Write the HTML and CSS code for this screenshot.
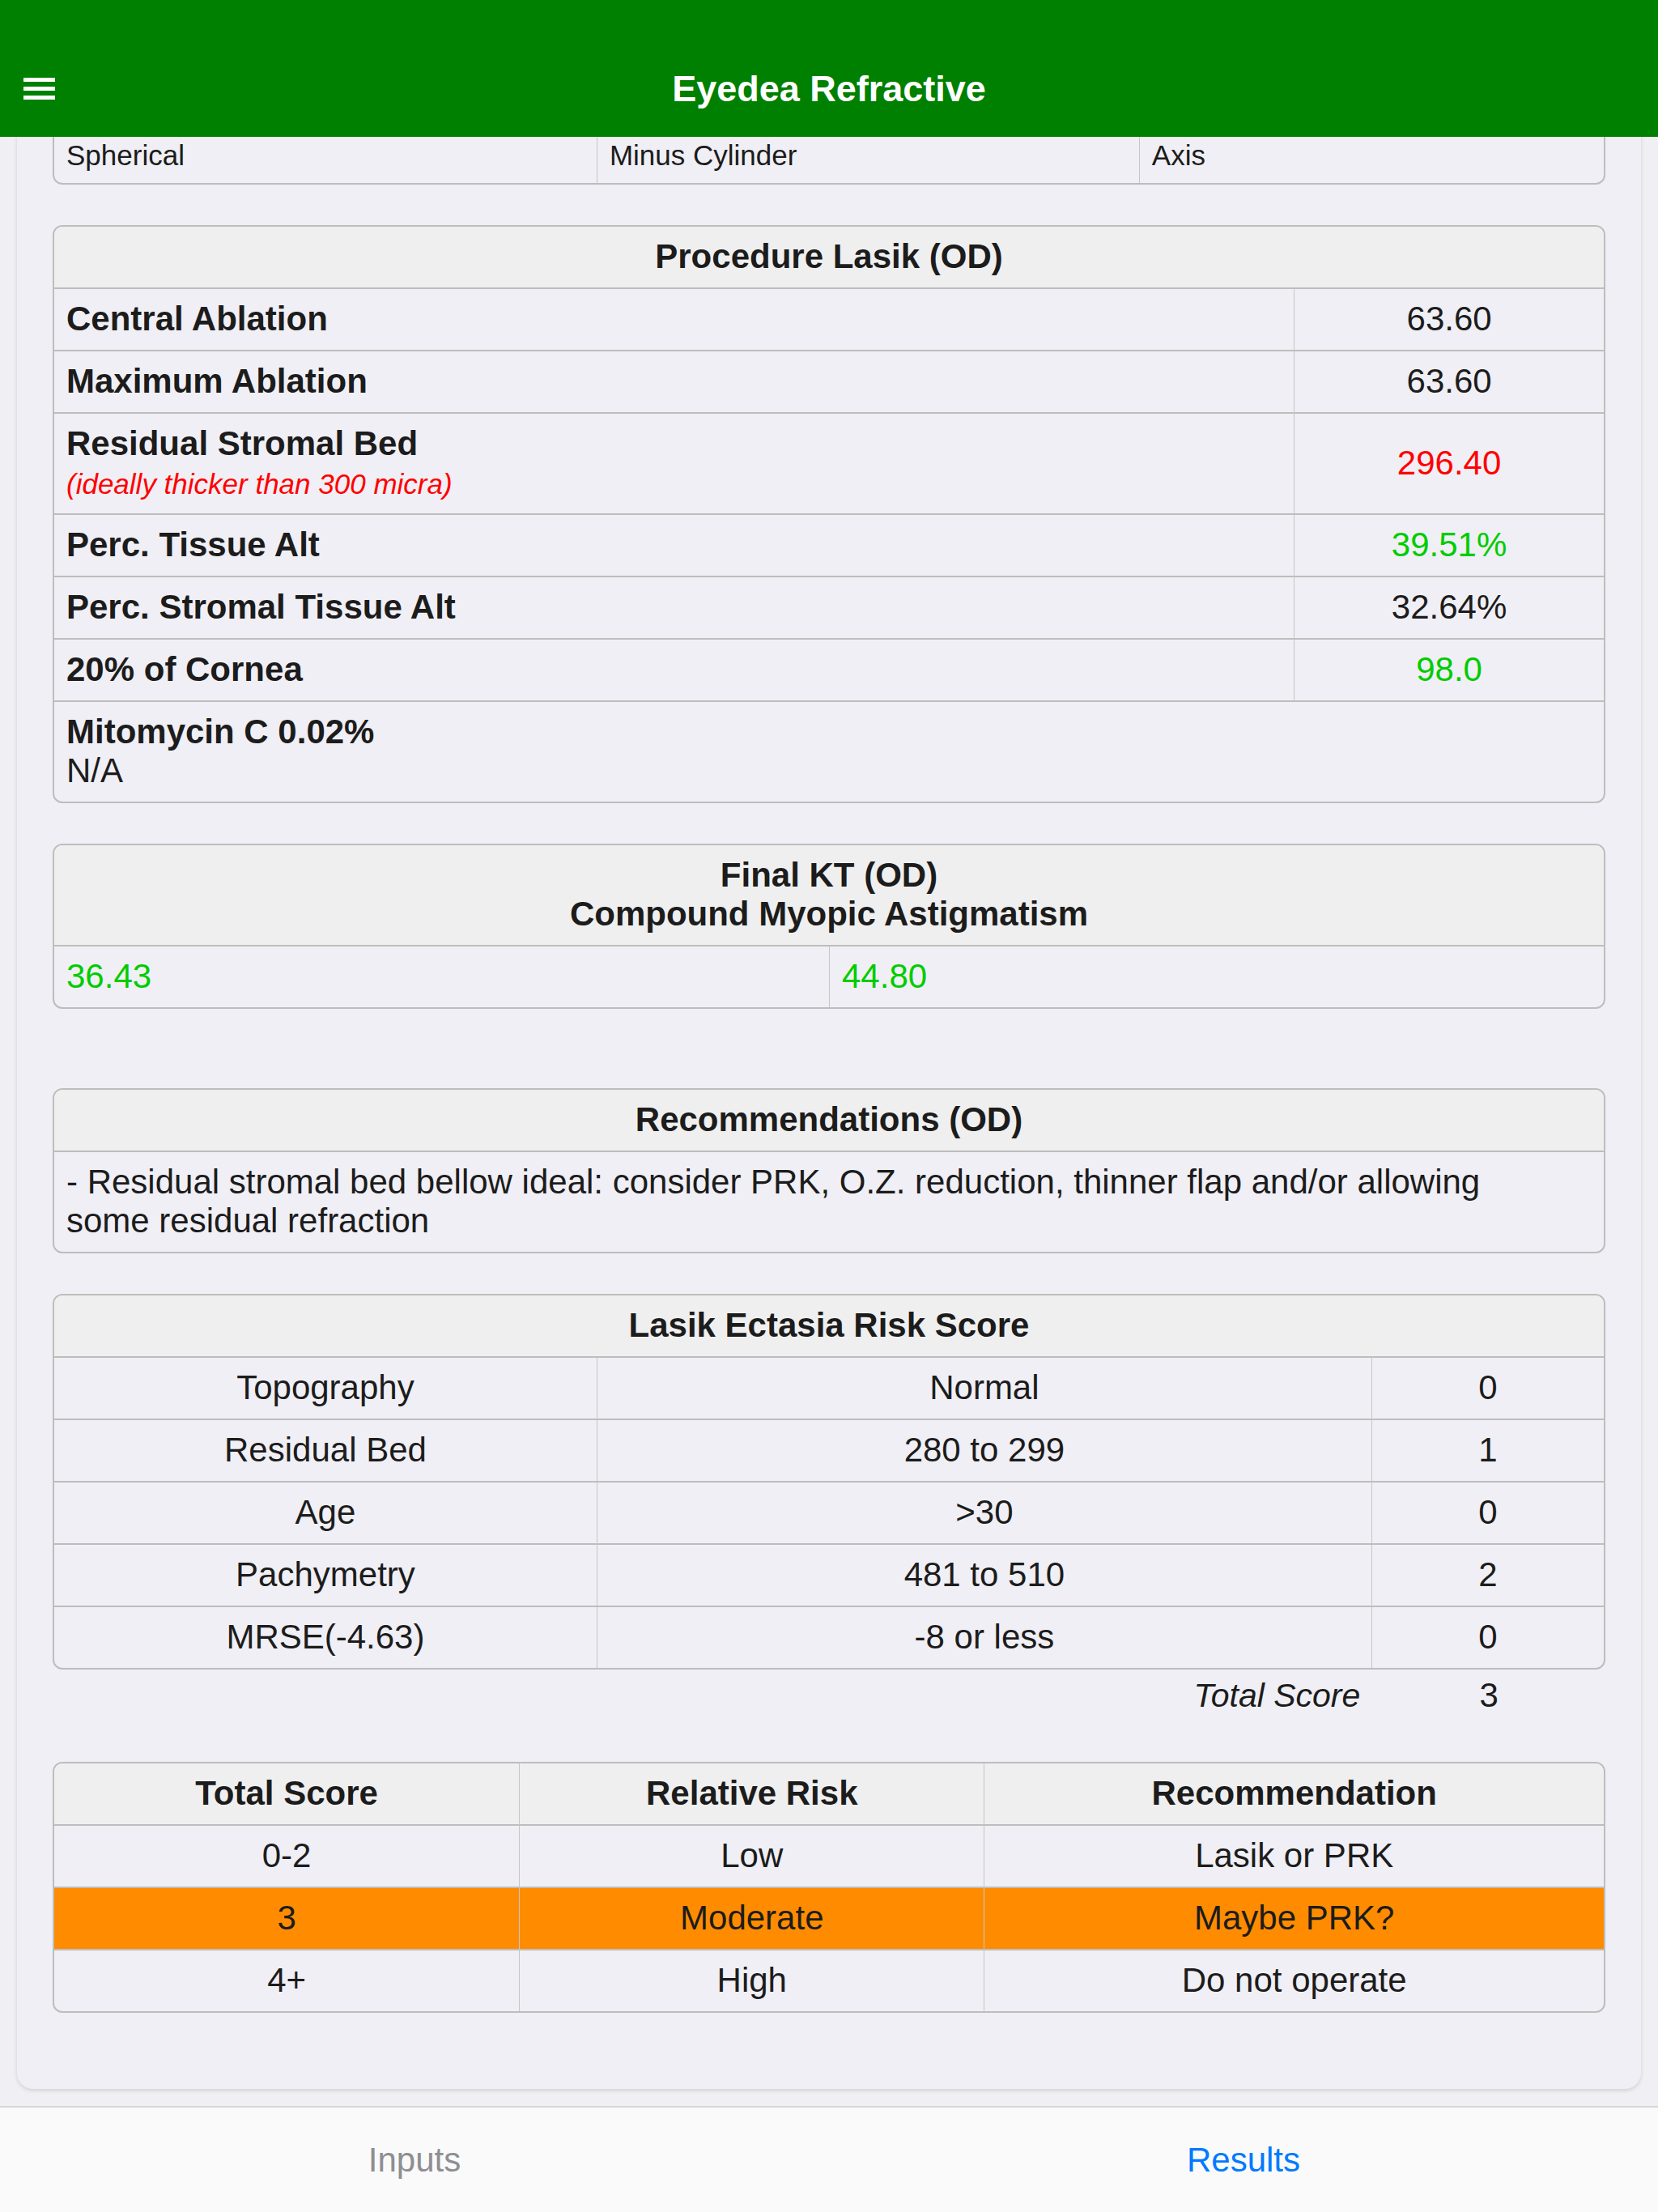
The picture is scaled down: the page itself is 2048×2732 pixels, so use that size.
FILE: index.html
```html
<!DOCTYPE html>
<html lang="en">
<head>
  <meta charset="UTF-8" />
  <meta name="viewport" content="width=device-width, initial-scale=1.0" />
  <title>Eyedea Refractive</title>
  <link rel="stylesheet" href="styles.css">
</head>
<body>
  <div class="app">
    <header class="navbar">
      <button class="nav-menu" title="Menu">
        <svg width="39" height="27" viewBox="0 0 39 27" fill="#fff">
          <rect x="0" y="0" width="39" height="5"></rect>
          <rect x="0" y="11" width="39" height="5"></rect>
          <rect x="0" y="22" width="39" height="5"></rect>
        </svg>
      </button>
      <h1 class="nav-title">Eyedea Refractive</h1>
      <span></span>
    </header>

    <main class="scroller">
      <div class="results-card">

        <table class="grid grid-small">
          <colgroup><col class="c35"><col class="c35"><col class="c30"></colgroup>
          <tr>
            <td>Spherical</td>
            <td>Minus Cylinder</td>
            <td>Axis</td>
          </tr>
        </table>

        <table class="grid">
          <colgroup><col class="c80"><col class="c20"></colgroup>
          <tr><th colspan="2">Procedure Lasik (OD)</th></tr>
          <tr><td class="lbl">Central Ablation</td><td class="num">63.60</td></tr>
          <tr><td class="lbl">Maximum Ablation</td><td class="num">63.60</td></tr>
          <tr>
            <td class="lbl">Residual Stromal Bed<br><span class="note">(ideally thicker than 300 micra)</span></td>
            <td class="num bad">296.40</td>
          </tr>
          <tr><td class="lbl">Perc. Tissue Alt</td><td class="num good">39.51%</td></tr>
          <tr><td class="lbl">Perc. Stromal Tissue Alt</td><td class="num">32.64%</td></tr>
          <tr><td class="lbl">20% of Cornea</td><td class="num good">98.0</td></tr>
          <tr><td colspan="2"><span class="lbl">Mitomycin C 0.02%</span><br>N/A</td></tr>
        </table>

        <table class="grid">
          <colgroup><col class="c50"><col class="c50"></colgroup>
          <tr><th colspan="2">Final KT (OD)<br>Compound Myopic Astigmatism</th></tr>
          <tr><td class="good">36.43</td><td class="good">44.80</td></tr>
        </table>

        <table class="grid spaced">
          <tr><th>Recommendations (OD)</th></tr>
          <tr><td class="wrap">- Residual stromal bed bellow ideal: consider PRK, O.Z. reduction, thinner flap and/or allowing some residual refraction</td></tr>
        </table>

        <div class="score-block">
          <table class="grid centered">
            <colgroup><col class="c35"><col class="c50"><col class="c15"></colgroup>
            <tr><th colspan="3">Lasik Ectasia Risk Score</th></tr>
            <tr><td>Topography</td><td>Normal</td><td>0</td></tr>
            <tr><td>Residual Bed</td><td>280 to 299</td><td>1</td></tr>
            <tr><td>Age</td><td>&gt;30</td><td>0</td></tr>
            <tr><td>Pachymetry</td><td>481 to 510</td><td>2</td></tr>
            <tr><td>MRSE(-4.63)</td><td>-8 or less</td><td>0</td></tr>
          </table>
          <table class="tally">
            <colgroup><col class="c35"><col class="c50"><col class="c15"></colgroup>
            <tr><td></td><td class="tally-label">Total Score</td><td class="tally-value">3</td></tr>
          </table>
        </div>

        <table class="grid centered">
          <colgroup><col class="c30"><col class="c30"><col class="c40"></colgroup>
          <tr><th>Total Score</th><th>Relative Risk</th><th>Recommendation</th></tr>
          <tr><td>0-2</td><td>Low</td><td>Lasik or PRK</td></tr>
          <tr class="hl"><td>3</td><td>Moderate</td><td>Maybe PRK?</td></tr>
          <tr><td>4+</td><td>High</td><td>Do not operate</td></tr>
        </table>

      </div>
    </main>

    <nav class="tabbar">
      <a class="tab">Inputs</a>
      <a class="tab active">Results</a>
    </nav>
  </div>
</body>
</html>
```

FILE: styles.css
```css
* { box-sizing: border-box; }
html, body { margin: 0; height: 100%; }
body {
  font-family: "Liberation Sans", Arial, Helvetica, sans-serif;
  font-size: 42px;
  color: #1c1c1c;
  background: #efeff4;
}
.app {
  height: 100vh;
  display: flex;
  flex-direction: column;
}

/* top bar */
.navbar {
  flex: none;
  height: 169px;
  padding-top: 50px;
  background: #008000;
  color: #fff;
  display: grid;
  grid-template-columns: 1fr auto 1fr;
  align-items: center;
}
.nav-menu {
  justify-self: start;
  margin-left: 29px;
  padding: 0;
  background: none;
  border: none;
  display: flex;
}
.nav-title {
  margin: 0;
  font-size: 45px;
  font-weight: bold;
}

/* scrolled content */
.scroller {
  flex: 1;
  min-height: 0;
  overflow: hidden;
}
.results-card {
  margin: -55px 21px 21px;
  padding: 44px 44px 94px;
  background: #f0eff5;
  border-radius: 20px;
  box-shadow: 0 2px 5px rgba(0, 0, 0, 0.13);
  display: flex;
  flex-direction: column;
  gap: 50px;
}
.spaced { margin-top: 48px; }

/* tables */
.grid {
  width: 100%;
  table-layout: fixed;
  border-collapse: separate;
  border-spacing: 0;
  border: 2px solid #bdbdbd;
  border-radius: 12px;
}
.grid th, .grid td {
  padding: 13px 15px 14px;
  border-bottom: 2px solid #bdbdbd;
  text-align: left;
  font-weight: normal;
}
.grid th {
  background: #efefef;
  font-weight: bold;
  text-align: center;
}
.grid th + th, .grid td + td { border-left: 1px solid #c6c6c6; }
.grid tr:last-child > * { border-bottom: 0; }
.grid tr:first-child > :first-child { border-top-left-radius: 10px; }
.grid tr:first-child > :last-child { border-top-right-radius: 10px; }
.grid-small td { font-size: 35px; padding: 12px 15px 14px; }
.grid.centered td { text-align: center; }
.grid .hl td { background: #ff8c00; }

.c15 { width: 15%; }
.c20 { width: 20%; }
.c30 { width: 30%; }
.c35 { width: 35%; }
.c40 { width: 40%; }
.c50 { width: 50%; }
.c80 { width: 80%; }

.grid .lbl { font-weight: bold; }
.grid td.num { text-align: center; }
.note {
  font-size: 35px;
  font-style: italic;
  font-weight: normal;
  color: #ff0000;
}
.bad { color: #ff0000; }
.good { color: #00cc00; }
.grid td.wrap { padding-right: 60px; }

.score-block { display: flex; flex-direction: column; }
.tally {
  width: 100%;
  table-layout: fixed;
  border-collapse: collapse;
}
.tally td { padding: 8px 15px; }
.tally-label { text-align: right; font-style: italic; font-size: 41px; }
.tally-value { text-align: center; }

/* bottom tabs */
.tabbar {
  flex: none;
  height: 131px;
  border-top: 2px solid #d6d6da;
  background: #fafafa;
  display: grid;
  grid-template-columns: 1fr 1fr;
  align-items: center;
}
.tab {
  text-align: center;
  color: #8e8e93;
}
.tab.active { color: #007aff; }
```
